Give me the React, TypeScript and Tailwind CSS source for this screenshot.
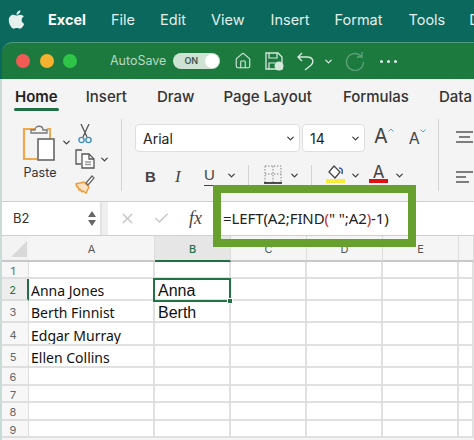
import { FaApple } from "react-icons/fa"
import { ChevronDown, Home, X, Check } from "lucide-react"

const sans = "font-['Inter',sans-serif]"
const calibri = "font-['Noto_Sans',sans-serif]"

const menuItems = [
  { label: "File", ml: "ml-[25px]" },
  { label: "Edit", ml: "ml-[25px]" },
  { label: "View", ml: "ml-[25px]" },
  { label: "Insert", ml: "ml-[26px]" },
  { label: "Format", ml: "ml-[25px]" },
  { label: "Tools", ml: "ml-[26px]" },
  { label: "Data", ml: "ml-[24px]" },
]

const tabs = [
  { label: "Home", ml: "ml-[13px]", bold: true },
  { label: "Insert", ml: "ml-[28px]" },
  { label: "Draw", ml: "ml-[30px]" },
  { label: "Page Layout", ml: "ml-[29px]" },
  { label: "Formulas", ml: "ml-[31px]" },
  { label: "Data", ml: "ml-[30px]" },
]

const rowHeights = ["h-[17px]", "h-[22px]", "h-[22px]", "h-[23px]", "h-[22px]", "h-[18px]", "h-[17px]", "h-[18px]", "h-[17px]"]
const names = ["", "Anna Jones", "Berth Finnist", "Edgar Murray", "Ellen Collins"]
const firsts = ["", "Anna", "Berth"]

function Chevron({ className }: { className: string }) {
  return <ChevronDown className={`shrink-0 text-[#3a3a3a] ${className}`} size={11} strokeWidth={2.6} />
}

function PasteIcon() {
  return (
    <svg width="36" height="38" viewBox="0 0 36 38" fill="none">
      <path d="M13 5H2v30h13" stroke="#f0a94e" strokeWidth="2.2" />
      <path d="M25 5h3v10" stroke="#f0a94e" strokeWidth="2" />
      <path d="M9 9V6h4c0-5 8-5 8 0h4v3z" fill="#f5f5f5" stroke="#777" strokeWidth="1.3" />
      <rect x="16" y="15" width="16" height="21" fill="#fff" stroke="#666" strokeWidth="1.6" />
    </svg>
  )
}

function ScissorsIcon() {
  return (
    <svg width="14" height="20" viewBox="0 0 14 20" fill="none">
      <path d="M3 0l6 13M11 0L5 13" stroke="#555" strokeWidth="1.3" />
      <circle cx="3.5" cy="16" r="2.6" stroke="#3f8fc4" strokeWidth="1.4" />
      <circle cx="10.5" cy="16" r="2.6" stroke="#3f8fc4" strokeWidth="1.4" />
    </svg>
  )
}

function CopyIcon() {
  return (
    <svg width="20" height="20" viewBox="0 0 20 20" fill="none" stroke="#555" strokeWidth="1.3">
      <path d="M7 1H1v14h5" />
      <path d="M7 5h7l5 5v9H7z" fill="#fff" />
      <path d="M14 5v5h5" />
      <path d="M10 13h6M10 15.5h6" stroke="#999" />
    </svg>
  )
}

function BrushIcon() {
  return (
    <svg width="20" height="19" viewBox="0 0 20 19" fill="none">
      <path d="M1 9l8-2 5 5-3 6-3-2-1 1-2-3-1 1-1-3-1 0z" fill="#fbe3c4" stroke="#ee9a3a" strokeWidth="1.4" />
      <path d="M11 8l6-7 2 2-6 7z" fill="#fff" stroke="#666" strokeWidth="1.2" />
    </svg>
  )
}

function AlignIcon({ short }: { short?: boolean }) {
  return (
    <svg width="17" height="13" viewBox="0 0 17 13" stroke="#555" strokeWidth="1.3" className="shrink-0">
      <path d={short ? "M0 1h17M0 6h10M0 11h13" : "M0 1h17M3 6h11M0 11h17"} />
    </svg>
  )
}

function BordersIcon() {
  return (
    <svg width="18" height="19" viewBox="0 0 18 19" fill="none" className="shrink-0">
      <path d="M1 1h16v16M1 1v16M9 1v16M1 9h16" stroke="#888" strokeWidth="1" strokeDasharray="1.5 1.5" />
      <path d="M0 18h18" stroke="#222" strokeWidth="1.6" />
    </svg>
  )
}

function FillIcon() {
  return (
    <div className="flex w-[19px] shrink-0 flex-col items-center">
      <svg width="17" height="14" viewBox="0 0 17 14" fill="none">
        <path d="M2 7l5-6 6 6-5 6z" fill="#fff" stroke="#444" strokeWidth="1.3" />
        <path d="M12 3c3 0 4 2 3 6" stroke="#2a62b0" strokeWidth="1.6" />
      </svg>
      <div className="h-[4px] w-full bg-[#f6ee3a]" />
    </div>
  )
}

function FontColorIcon() {
  return (
    <div className="flex w-[19px] shrink-0 flex-col items-center">
      <span className={`${sans} h-[14px] text-[17px] leading-[15px] text-[#444]`}>A</span>
      <div className="h-[4px] w-full bg-[#e01010]" />
    </div>
  )
}

function FontSizeUp() {
  return (
    <div className="flex shrink-0 items-start">
      <span className={`${sans} text-[20px] leading-[25px] text-[#444]`}>A</span>
      <svg width="6" height="4" viewBox="0 0 6 4" fill="none" className="mt-[4px]">
        <path d="M.5 3.5L3 1l2.5 2.5" stroke="#5a9fd0" strokeWidth="1" />
      </svg>
    </div>
  )
}

function FontSizeDown() {
  return (
    <div className="flex shrink-0 items-start">
      <span className={`${sans} mt-[3px] text-[16px] leading-[22px] text-[#444]`}>A</span>
      <svg width="6" height="4" viewBox="0 0 6 4" fill="none" className="mt-[5px]">
        <path d="M.5.5L3 3l2.5-2.5" stroke="#5a9fd0" strokeWidth="1" />
      </svg>
    </div>
  )
}

export default function App() {
  return (
    <div className="relative flex h-[440px] w-[474px] flex-col overflow-hidden bg-[#0a685c]">
      {/* mac menu bar */}
      <div className={`${sans} flex h-[42px] shrink-0 items-center whitespace-nowrap pb-[3px] text-[14.5px] text-[#e4efec]`}>
        <FaApple className="ml-[6px] mt-[-1px] shrink-0 text-[#e8f0ee]" size={21} />
        <span className="ml-[21px] font-bold text-white">Excel</span>
        {menuItems.map((item) => (
          <span key={item.label} className={item.ml}>
            {item.label}
          </span>
        ))}
      </div>

      {/* window title bar */}
      <div className="ml-[2px] flex h-[37px] shrink-0 items-center rounded-tl-[10px] border-t border-[#4f9a7d] bg-[#1d7a3e]">
        <div className="ml-[14px] h-[14px] w-[14px] rounded-full bg-[#f25a55]" />
        <div className="ml-[10px] h-[14px] w-[14px] rounded-full bg-[#f6b12e]" />
        <div className="ml-[9px] h-[14px] w-[14px] rounded-full bg-[#2ec548]" />
        <span className={`${sans} ml-[33px] text-[12.5px] text-[#b9d8c4]`}>AutoSave</span>
        <div className="ml-[7px] flex h-[16px] w-[47px] items-center justify-between rounded-full bg-[#cfe3d5] pl-[11px] pr-[1px]">
          <span className={`${sans} text-[9px] font-semibold text-[#40594a]`}>ON</span>
          <div className="h-[14px] w-[14px] rounded-full bg-white" />
        </div>
        <Home className="ml-[14px] text-[#d6e8dc]" size={18} strokeWidth={1.5} />
        <svg width="19" height="19" viewBox="0 0 19 19" fill="none" className="ml-[13px]">
          <path d="M1 1h12l4 4v12H1z" stroke="#d6e8dc" strokeWidth="1.3" />
          <path d="M4 1v5h8V1M4 17v-6h7" stroke="#d6e8dc" strokeWidth="1.2" />
          <circle cx="14" cy="14" r="4.5" fill="#d6e8dc" />
        </svg>
        <svg width="18" height="19" viewBox="0 0 18 19" fill="none" className="ml-[13px]">
          <path d="M5 1L1 5l4 4M1 5h9c6 0 8 5 3 9l-5 4" stroke="#d6e8dc" strokeWidth="1.4" />
        </svg>
        <ChevronDown className="ml-[8px] text-[#e4efec]" size={11} strokeWidth={2.6} />
        <svg width="20" height="20" viewBox="0 0 20 20" fill="none" className="ml-[11px]">
          <path d="M16 5A8.5 8.5 0 1 0 18.5 11M17 1v5h-5" stroke="#5fa37a" strokeWidth="1.3" />
        </svg>
        <div className="ml-[15px] flex gap-[4px]">
          <div className="h-[3px] w-[3px] rounded-full bg-[#e4efec]" />
          <div className="h-[3px] w-[3px] rounded-full bg-[#e4efec]" />
          <div className="h-[3px] w-[3px] rounded-full bg-[#e4efec]" />
        </div>
      </div>

      <div className="flex min-h-0 flex-1 flex-col border-l-2 border-[#c9dbd6] bg-[#f4f4f4]">
        {/* ribbon tabs */}
        <div className={`${sans} flex h-[31px] shrink-0 items-center whitespace-nowrap pt-[5px] text-[15px] text-[#333]`}>
          {tabs.map((tab) => (
            <span key={tab.label} className={`relative font-medium ${tab.ml} ${tab.bold ? "font-semibold text-[#222]" : ""}`}>
              {tab.label}
              {tab.bold && <div className="absolute left-[-1px] right-[-1px] top-[22px] h-[3px] rounded-full bg-[#1f6e45]" />}
            </span>
          ))}
        </div>

        {/* ribbon */}
        <div className="flex h-[91px] shrink-0 pt-[14px]">
          <div className="ml-[17px] flex w-[42px] flex-col items-center">
            <PasteIcon />
            <span className={`${sans} mt-[2px] text-[12.5px] text-[#333]`}>Paste</span>
          </div>
          <Chevron className="mt-[13px]" />
          <div className="ml-[3px] flex flex-col items-start">
            <div className="ml-[3px]"><ScissorsIcon /></div>
            <div className="mt-[5px] flex items-center"><CopyIcon /><Chevron className="ml-[4px]" /></div>
            <div className="mt-[6px]"><BrushIcon /></div>
          </div>
          <div className="ml-[11px] mt-[-5px] h-[72px] w-px bg-[#d4d4d4]" />

          <div className="ml-[13px] flex w-[303px] shrink-0 flex-col">
            <div className="flex items-start">
              <div className={`${sans} flex h-[28px] w-[165px] items-center justify-between rounded-[4px] border border-[#dedede] bg-white pl-[7px] pr-[3px] text-[14px] text-[#222]`}>
                Arial
                <Chevron className="" />
              </div>
              <div className={`${sans} ml-[2px] flex h-[28px] w-[63px] items-center justify-between rounded-[4px] border border-[#dedede] bg-white pl-[7px] pr-[3px] text-[14px] text-[#222]`}>
                14
                <Chevron className="" />
              </div>
              <div className="ml-[9px]"><FontSizeUp /></div>
              <div className="ml-[15px]"><FontSizeDown /></div>
            </div>
            <div className="mt-[13px] flex items-start text-[#444]">
              <span className="ml-[10px] w-[10px] font-['Liberation_Sans',sans-serif] text-[15px] font-bold leading-[24px]">B</span>
              <span className="ml-[20px] w-[8px] font-['Liberation_Serif',serif] text-[17px] italic leading-[24px]">I</span>
              <span className="ml-[21px] w-[11px] border-b border-[#444] font-['Liberation_Sans',sans-serif] text-[15px] leading-[20px]">U</span>
              <Chevron className="ml-[11px] mt-[5px]" />
              <div className="ml-[11px] h-[24px] w-px bg-[#d4d4d4]" />
              <div className="ml-[15px]"><BordersIcon /></div>
              <Chevron className="ml-[7px] mt-[5px]" />
              <div className="ml-[11px] h-[24px] w-px bg-[#d4d4d4]" />
              <div className="ml-[14px]"><FillIcon /></div>
              <Chevron className="ml-[5px] mt-[5px]" />
              <div className="ml-[8px]"><FontColorIcon /></div>
              <Chevron className="ml-[6px] mt-[5px]" />
            </div>
          </div>

          <div className="mt-[-5px] h-[72px] w-px bg-[#d4d4d4]" />
          <div className="ml-[17px] flex flex-col gap-[27px] pt-[7px]">
            <AlignIcon />
            <AlignIcon short />
          </div>
        </div>

        {/* formula bar */}
        <div className="flex h-[35px] shrink-0 border-y border-[#cfcfcf] bg-white">
          <div className={`${sans} flex w-[100px] items-center justify-between border-r-2 border-[#e2e2e2] pl-[11px] pr-[4px] text-[13px] text-[#333]`}>
            B2
            <div className="flex flex-col gap-[3px]">
              <div className="h-0 w-0 border-x-[4px] border-b-[6px] border-x-transparent border-b-[#666]" />
              <div className="h-0 w-0 border-x-[4px] border-t-[6px] border-x-transparent border-t-[#666]" />
            </div>
          </div>
          <div className="w-[6px] bg-[#efefef]" />
          <div className="flex items-center">
            <X className="ml-[11px] text-[#c8c8c8]" size={17} strokeWidth={2.2} />
            <Check className="ml-[17px] text-[#c8c8c8]" size={17} strokeWidth={2.2} />
            <span className="ml-[19px] font-['Liberation_Serif',serif] text-[18px] italic text-[#444]">fx</span>
          </div>
          <div className={`${calibri} ml-[21px] flex items-center whitespace-pre text-[15px] tracking-[-0.1px] text-[#222]`}>
            <span>
              =LEFT(A2;FIND<span className="text-[#c0301f]">(</span>" ";A2<span className="text-[#c0301f]">)</span>-1)
            </span>
          </div>
        </div>

        {/* sheet */}
        <div className="relative grid grid-cols-[27px_126px_76px_76px_76px_76px_15px] bg-white">
          <div className="flex h-[26px] items-end justify-end border-b-2 border-[#c8c8c8] bg-[#f3f3f3] pb-[3px] pr-[2px]">
            <div className="h-0 w-0 border-b-[16px] border-l-[16px] border-b-[#d9d9d9] border-l-transparent" />
          </div>
          {["A", "B", "C", "D", "E", ""].map((col) => (
            <div
              key={col}
              className={`${sans} flex h-[26px] items-center justify-center border-r border-[#dcdcdc] pt-[2px] text-[11px] ${
                col === "B" ? "border-b-2 border-b-[#1f6e45] bg-[#e6e6e6] font-medium text-[#1f6e45]" : "border-b-2 border-b-[#c8c8c8] bg-[#f5f5f5] text-[#555]"
              }`}
            >
              {col}
            </div>
          ))}
          {rowHeights.map((h, i) => (
            <div key={i} className="contents">
              <div
                className={`${sans} ${h} flex items-center justify-center border-b-2 border-r border-[#dedede] pr-[4px] pt-[3px] text-[11px] ${
                  i === 1 ? "border-r-2 border-r-[#1f6e45] bg-[#eeeeee] text-[#1f6e45]" : "bg-[#f7f7f7] text-[#666]"
                }`}
              >
                {i + 1}
              </div>
              <div className={`${calibri} ${h} flex items-center overflow-hidden whitespace-nowrap border-b-2 border-r-2 border-[#e0e0e0] pl-[2px] pt-[3px] text-[14px] text-[#111]`}>
                {names[i]}
              </div>
              <div className={`${h} flex items-center overflow-hidden border-b-2 border-r-2 border-[#e0e0e0] pl-[3px] pt-[3px] font-['Liberation_Sans',sans-serif] text-[16px] text-[#111]`}>
                {firsts[i]}
              </div>
              {[0, 1, 2, 3].map((c) => (
                <div key={c} className={`${h} border-b-2 border-r-2 border-[#e0e0e0]`} />
              ))}
            </div>
          ))}
          {/* selected cell */}
          <div className="absolute left-[151px] top-[42px] h-[24px] w-[78px] border-2 border-[#217346]" />
          <div className="absolute left-[225px] top-[62px] h-[6px] w-[6px] border border-white bg-[#217346]" />
        </div>
      </div>

      {/* callout frame around the formula */}
      <div className="absolute left-[213px] top-[185px] h-[62px] w-[203px] border-[8px] border-[#68a02f]" />
    </div>
  )
}
